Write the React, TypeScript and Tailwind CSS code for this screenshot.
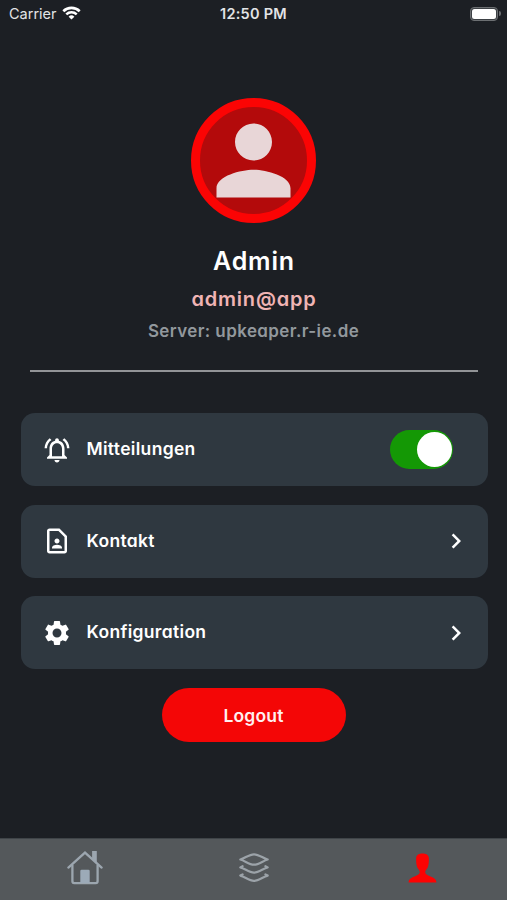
import React from "react";
import {
  MdChevronRight,
  MdOutlineContactPage,
  MdOutlineNotificationsActive,
  MdPerson,
  MdSettings,
} from "react-icons/md";

const StatusBar: React.FC = () => {
  return (
    <div className="grid h-7 grid-cols-3 items-center text-[14.5px] leading-none text-[#e2e4e6]">
      <div className="flex items-center gap-[5px] pl-[9px]">
        <span>Carrier</span>
        <svg className="-mt-[2px]" width="19" height="14" viewBox="0 0 19 14" fill="none" stroke="white">
          <path d="M1.3 5.2a11.7 11.7 0 0 1 16.4 0" strokeWidth="2.6" />
          <path d="M4.3 8.4a7.4 7.4 0 0 1 10.4 0" strokeWidth="2.5" />
          <path d="M9.5 13.6 6.6 10.7a4.1 4.1 0 0 1 5.8 0z" fill="white" stroke="none" />
        </svg>
      </div>
      <div className="text-center font-semibold tracking-[0.25px] whitespace-nowrap">
        12:50 PM
      </div>
      <div className="-mt-px flex items-center justify-end gap-px pr-[6px]">
        <div className="h-[14px] w-[28px] rounded-[4px] border border-[#6c6f72] bg-[#3d4145] p-px">
          <div className="h-full w-full rounded-[2.5px] bg-white" />
        </div>
        <div className="h-[5px] w-[2px] rounded-r-full bg-[#6b6e72]" />
      </div>
    </div>
  );
};

const Profile: React.FC = () => {
  return (
    <div className="mr-[29px] ml-[30px] mt-[70px] flex h-[274px] flex-col items-center border-b-2 border-[#929497] font-semibold whitespace-nowrap">
      <div className="mr-px flex h-[125px] w-[125px] shrink-0 items-center justify-center rounded-full border-[9px] border-[#fb0404] bg-[#b30a0b]">
        <MdPerson size={111} className="shrink-0 text-[#e8d6d7]" />
      </div>
      <h1 className="mt-[22px] text-[25px] leading-8 tracking-[0.8px] text-white">
        Admin
      </h1>
      <p className="mt-[10px] text-[20px] leading-6 tracking-[0.8px] text-[#f0b4b4]">
        admin@app
      </p>
      <p className="mt-[10px] mr-px text-[17px] leading-5 tracking-[0.4px] text-[#92989d]">
        Server: upkeaper.r-ie.de
      </p>
    </div>
  );
};

interface RowProps {
  icon: React.ReactNode;
  label: string;
  children: React.ReactNode;
}

const Row: React.FC<RowProps> = ({ icon, label, children }) => {
  return (
    <div className="flex h-[73px] items-center rounded-[14px] bg-[#2f3840] pl-[21px] text-white">
      {icon}
      <span className="ml-[15px] flex-1 text-[17.5px] font-semibold tracking-[0.32px]">
        {label}
      </span>
      {children}
    </div>
  );
};

const TabBar: React.FC = () => {
  return (
    <div className="grid h-[62px] grid-cols-3 justify-items-center border-t border-[#3f4448] bg-[#54585b] pt-[12px]">
      <svg width="36" height="34" viewBox="0 0 36 34" fill="none" stroke="#9ca6af" strokeWidth="2.3">
        <path d="M1.4 16.6 18 1.6l16.6 15" strokeLinecap="round" />
        <path d="M5.4 14v16.3q0 1.9 1.9 1.9h21.4q1.9 0 1.9-1.9V14" />
        <path d="M25.1 7V0h4.7v12l-4.7-4.2z" fill="#9ca6af" stroke="none" />
        <path d="M13.3 32V20q0-1.3 1.3-1.3h6.8q1.3 0 1.3 1.3V32z" fill="#9caab8" stroke="none" />
      </svg>
      <svg className="mt-[2px]" width="30" height="30" viewBox="0 0 30 30" fill="none" stroke="#9ca3a9" strokeWidth="2.2" strokeLinejoin="round" strokeLinecap="round">
        <path d="M1.3 6.5C6 5.3 10 1.3 15 1.3s9 4 13.7 5.2C24 7.7 20 11.7 15 11.7S6 7.7 1.3 6.5z" />
        <path d="M3.6 13.2 1.3 14.4C6 15.6 10 19.6 15 19.6s9-4 13.7-5.2l-2.3-1.2" />
        <path d="M3.6 21.4 1.3 22.6C6 23.8 10 27.8 15 27.8s9-4 13.7-5.2l-2.3-1.2" />
      </svg>
      <svg className="mt-[2px]" width="29" height="30" viewBox="0 0 30 30" fill="#fc0303">
        <path d="M15 0c-4.600 0-6.800 2.200-6.600 5.800 0 3 .1 6.500 1.500 9.100 1 1.700 2.300 2.500 2.300 4.300 0 2.200-2 3.400-5.500 4.700C3 25.400.8 26.600.6 30h28.800c-.2-3.400-2.400-4.600-6.100-6.100-3.500-1.300-5.500-2.500-5.500-4.700 0-1.800 1.300-2.600 2.300-4.300 1.400-2.600 1.500-6.100 1.500-9.100C21.800 2.200 19.600 0 15 0z" />
      </svg>
    </div>
  );
};

const App: React.FC = () => {
  return (
    <div className="flex h-[900px] w-[507px] flex-col overflow-hidden bg-[#1c1f24] font-[Inter,sans-serif]">
      <StatusBar />
      <div className="flex-1 [font-feature-settings:'cv11']">
        <Profile />
        <div className="mt-[41px] mr-[19.5px] ml-[20.5px] flex flex-col gap-[18.5px]">
          <Row icon={<MdOutlineNotificationsActive size={30} />} label="Mitteilungen">
            <div className="mr-[34.5px] flex h-[39px] w-[63px] items-center justify-end rounded-full bg-[#149805] pr-[1.5px]">
              <div className="h-[35px] w-[35px] rounded-full bg-white" />
            </div>
          </Row>
          <Row icon={<MdOutlineContactPage size={30} />} label="Kontakt">
            <MdChevronRight size={30} className="mr-[17px]" />
          </Row>
          <Row icon={<MdSettings size={30} />} label="Konfiguration">
            <MdChevronRight size={30} className="mr-[17px]" />
          </Row>
        </div>
        <button className="mx-auto mt-[19px] block h-[54px] w-[184px] rounded-full bg-[#f40606] pt-[2px] text-[17.5px] font-semibold tracking-[0.2px] text-[#fff0f0]">
          Logout
        </button>
      </div>
      <TabBar />
    </div>
  );
};

export default App;
